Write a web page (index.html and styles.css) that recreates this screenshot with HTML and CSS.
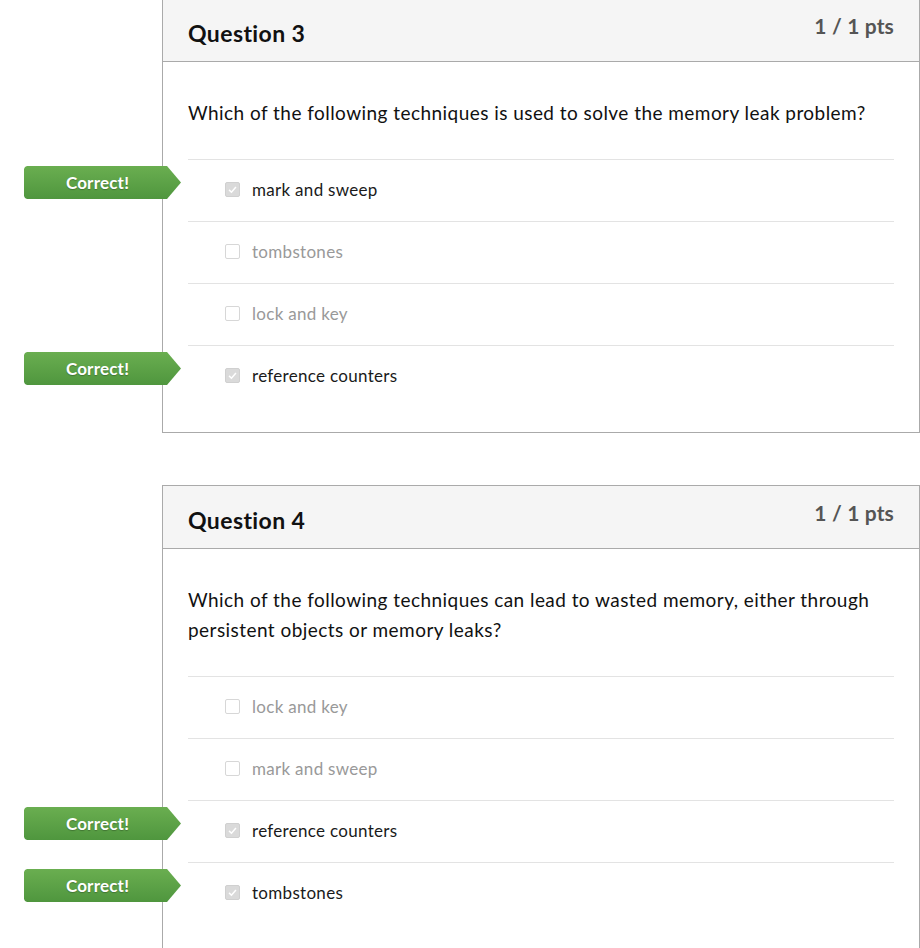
FILE: index.html
```html
<!DOCTYPE html>
<html>
<head>
<meta charset="utf-8">
<link rel="stylesheet" href="styles.css">
</head>
<body>
<div class="page">
  <div class="card card-first">
    <div class="card-header">
      <h2 class="title">Question 3</h2>
      <div class="pts">1 / 1 pts</div>
    </div>
    <div class="card-body">
      <p class="question">Which of the following techniques is used to solve the memory leak problem?</p>
      <div class="answers">
        <div class="answer selected">
          <span class="badge">Correct!</span>
          <span class="box checked"><svg viewBox="0 0 16 16" width="11" height="11"><path d="M3 8.5 L6.5 12 L13 4.5" fill="none" stroke="#fff" stroke-width="2.2"/></svg></span>
          <span class="label">mark and sweep</span>
        </div>
        <div class="answer">
          <span class="box"></span>
          <span class="label">tombstones</span>
        </div>
        <div class="answer">
          <span class="box"></span>
          <span class="label">lock and key</span>
        </div>
        <div class="answer selected">
          <span class="badge">Correct!</span>
          <span class="box checked"><svg viewBox="0 0 16 16" width="11" height="11"><path d="M3 8.5 L6.5 12 L13 4.5" fill="none" stroke="#fff" stroke-width="2.2"/></svg></span>
          <span class="label">reference counters</span>
        </div>
      </div>
    </div>
  </div>

  <div class="card">
    <div class="card-header">
      <h2 class="title">Question 4</h2>
      <div class="pts">1 / 1 pts</div>
    </div>
    <div class="card-body">
      <p class="question">Which of the following techniques can lead to wasted memory, either through persistent objects or memory leaks?</p>
      <div class="answers">
        <div class="answer">
          <span class="box"></span>
          <span class="label">lock and key</span>
        </div>
        <div class="answer">
          <span class="box"></span>
          <span class="label">mark and sweep</span>
        </div>
        <div class="answer selected">
          <span class="badge">Correct!</span>
          <span class="box checked"><svg viewBox="0 0 16 16" width="11" height="11"><path d="M3 8.5 L6.5 12 L13 4.5" fill="none" stroke="#fff" stroke-width="2.2"/></svg></span>
          <span class="label">reference counters</span>
        </div>
        <div class="answer selected">
          <span class="badge">Correct!</span>
          <span class="box checked"><svg viewBox="0 0 16 16" width="11" height="11"><path d="M3 8.5 L6.5 12 L13 4.5" fill="none" stroke="#fff" stroke-width="2.2"/></svg></span>
          <span class="label">tombstones</span>
        </div>
      </div>
    </div>
  </div>
</div>
</body>
</html>
```

FILE: styles.css
```css
html, body {
  margin: 0;
  padding: 0;
  background: #fff;
}
body {
  font-family: Lato, "Open Sans", sans-serif;
  color: #2d3b45;
  width: 920px;
  height: 948px;
  overflow: hidden;
}
.page {
  padding-left: 162px;
}
.card {
  border: 1px solid #aaaaaa;
  margin-bottom: 52px;
}
.card-first {
  margin-top: -2px;
}
.card-header {
  background: #f5f5f5;
  border-bottom: 1px solid #aaaaaa;
  height: 63px;
  box-sizing: border-box;
  padding: 0 25px;
  display: flex;
  justify-content: space-between;
  align-items: flex-start;
}
.title {
  margin: 0;
  padding-top: 21px;
  font-size: 23px;
  letter-spacing: 0.4px;
  line-height: 26px;
  font-weight: 700;
  color: #111;
}
.pts {
  padding-top: 15px;
  font-size: 21px;
  letter-spacing: 0.15px;
  line-height: 24px;
  font-weight: 700;
  color: #555;
}
.card-body {
  padding: 36px 25px 25px 25px;
}
.question {
  margin: 0 0 31px 0;
  font-size: 19px;
  letter-spacing: 0.45px;
  line-height: 30px;
  color: #111;
}
.answer {
  position: relative;
  border-top: 1px solid #e3e3e3;
  height: 61px;
  display: flex;
  align-items: center;
  padding-left: 37px;
}
.box {
  width: 13px;
  height: 13px;
  border: 1px solid #d7d7d7;
  border-radius: 2px;
  background: #fff;
  margin-right: 12px;
  margin-top: -2px;
  display: flex;
  align-items: center;
  justify-content: center;
}
.box.checked {
  background: #dadada;
  border-color: #d0d0d0;
}
.label {
  font-size: 17px;
  letter-spacing: 0.3px;
  line-height: 20px;
  color: #999999;
  margin-top: -1px;
}
.selected .label {
  color: #1a1a1a;
}
.badge {
  position: absolute;
  left: -164px;
  top: 6px;
  width: 157px;
  height: 33px;
  box-sizing: border-box;
  padding-right: 10px;
  background: linear-gradient(#6aae50, #4f963e);
  clip-path: polygon(0 3px, 1px 1px, 3px 0, 143px 0, 157px 16.5px, 143px 33px, 3px 33px, 1px 32px, 0 30px);
  color: #fff;
  font-size: 17px;
  letter-spacing: 0.2px;
  font-weight: 700;
  display: flex;
  align-items: center;
  justify-content: center;
  text-shadow: 0 1px 1px rgba(0,0,0,0.25);
}
```
